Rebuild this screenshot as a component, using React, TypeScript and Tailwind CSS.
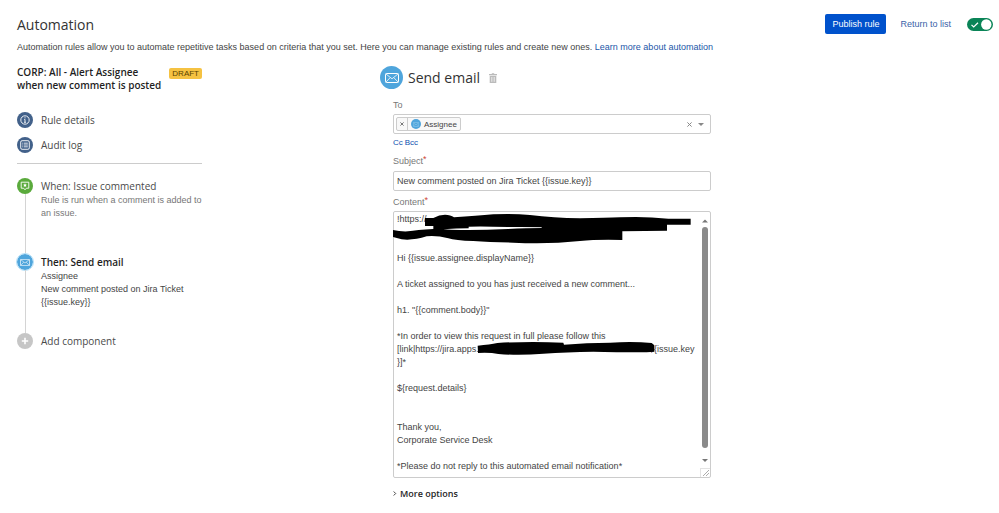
import { useState } from "react"
import type { ReactNode } from "react"

const HEADING = "font-['Open_Sans',sans-serif]"

const initialContent = [
  "!https://",
  "",
  "",
  "Hi {{issue.assignee.displayName}}",
  "",
  "A ticket assigned to you has just received a new comment...",
  "",
  'h1. "{{comment.body}}"',
  "",
  "*In order to view this request in full please follow this",
  "[link|https://jira.apps." + "\u00a0".repeat(68) + "${issue.key",
  "}]*",
  "",
  "${request.details}",
  "",
  "",
  "Thank you,",
  "Corporate Service Desk",
  "",
  "*Please do not reply to this automated email notification*",
].join("\n")

function MailIcon({ className }: { className: string }) {
  return (
    <svg viewBox="0 0 14 10" className={className} fill="none" stroke="currentColor" aria-hidden="true">
      <rect x="0.5" y="0.5" width="13" height="9" rx="0.8" />
      <path d="M1 1l6 4.8L13 1M1 9l4.2-4.4M13 9L8.8 4.6" strokeWidth="0.8" />
    </svg>
  )
}

function InfoIcon() {
  return (
    <svg viewBox="0 0 10 10" className="size-[10px]" fill="none" stroke="currentColor" aria-hidden="true">
      <circle cx="5" cy="5" r="4.2" strokeWidth="0.9" />
      <path d="M5 4.4v3M4.3 4.5H5M4.1 7.3h1.8" strokeWidth="0.9" />
      <circle cx="5" cy="2.8" r="0.6" fill="currentColor" stroke="none" />
    </svg>
  )
}

function LogIcon() {
  return (
    <svg viewBox="0 0 10 10" className="size-[10px]" fill="none" stroke="currentColor" aria-hidden="true">
      <rect x="0.7" y="0.7" width="8.6" height="8.6" rx="1.4" strokeWidth="0.9" />
      <path d="M2.3 3.2h.8M3.8 3.2h4M2.3 5h.8M3.8 5h4M2.3 6.8h.8M3.8 6.8h4" strokeWidth="0.8" />
    </svg>
  )
}

function CommentIcon() {
  return (
    <svg viewBox="0 0 10 10" className="size-[10px]" fill="none" stroke="currentColor" aria-hidden="true">
      <path d="M1.2 1.2h7.6v6H6.4L5 8.8 3.6 7.2H1.2z" strokeWidth="0.9" strokeLinejoin="round" />
      <path d="M5 2.3l.6 1.2 1.3.2-.9.9.2 1.3L5 5.3l-1.2.6.2-1.3-.9-.9 1.3-.2z" fill="currentColor" stroke="none" />
    </svg>
  )
}

function Step({
  icon,
  color,
  title,
  active,
  last,
  className,
  children,
}: {
  icon: ReactNode
  color: string
  title: string
  active?: boolean
  last?: boolean
  className: string
  children?: ReactNode
}) {
  return (
    <li className={`flex gap-2 ${className}`}>
      {/* Pastille + trait de liaison */}
      <div className="flex w-4 shrink-0 flex-col items-center">
        <span className={`flex size-4 shrink-0 items-center justify-center rounded-full text-white ${color}`}>
          {icon}
        </span>
        {!last && <span className="w-px flex-1 bg-[#d4d4d4]" />}
      </div>
      <div className="min-w-0 flex-1">
        <button
          type="button"
          className={`${HEADING} block text-[10px] leading-4 ${
            active ? "font-semibold text-[#1f1f1f]" : "text-[#4a4a4a]"
          }`}
        >
          {title}
        </button>
        {children}
      </div>
    </li>
  )
}

/* Traits noirs qui masquent les adresses internes */
function Redactions() {
  return (
    <svg
      viewBox="39 63 954 801"
      className="pointer-events-none absolute top-0 left-0 h-[267px] w-[318px]"
      fill="#000"
      aria-hidden="true"
    >
      <path d="M135 84 160 84Q178 74 195 74Q212 74 222 82Q290 78 340 73Q400 70 450 75Q520 84 600 85Q680 84 720 82Q790 78 865 86H932V104H861V122L727 124V150Q650 148 600 153Q500 164 400 158Q330 157 280 153Q225 152 205 145Q170 136 140 139Q100 152 65 148L38 141V120Q60 125 84 124Q110 120 160 117V108H135Z" />
      <path d="M266 110Q300 108 384 111Q440 110 485 112V114Q440 114 384 117Q320 120 265 120Q220 121 190 118Q230 115 266 115Z" fill="#fff" />
      <path d="M293 467Q330 464 352 459Q450 453 550 458L552 464Q620 458 690 458Q760 454 815 459L823 466V485L800 487Q700 487 640 485Q560 486 490 491Q420 497 355 492Q330 487 294 489Z" />
    </svg>
  )
}

export default function App() {
  const [enabled, setEnabled] = useState(true)
  const [subject, setSubject] = useState("New comment posted on Jira Ticket {{issue.key}}")
  const [content, setContent] = useState(initialContent)

  return (
    <div className="min-h-screen bg-white font-['Liberation_Sans',Arial,sans-serif] text-[9px] leading-[13px] text-[#444]">
      <header className="flex items-start justify-between pt-[14px] pr-1.5 pl-[17px]">
        <div>
          <h1 className={`${HEADING} text-[14px] leading-[22px] text-[#333]`}>Automation</h1>
          <p className="mt-[5px]">
            Automation rules allow you to automate repetitive tasks based on criteria that you set. Here you can manage
            existing rules and create new ones.{" "}
            <a href="#learn" className="text-[#1a56a8]">
              Learn more about automation
            </a>
          </p>
        </div>
        <div className="flex items-center">
          <button type="button" className="h-5 rounded-xs bg-[#0052cc] px-[7px] text-white">
            Publish rule
          </button>
          <a href="#list" className="ml-[14px] text-[#3a62a8]">
            Return to list
          </a>
          <label className="relative ml-4 h-[13px] w-[26px] shrink-0">
            <input
              type="checkbox"
              role="switch"
              aria-label="Rule enabled"
              checked={enabled}
              onChange={(e) => setEnabled(e.target.checked)}
              className="peer block h-full w-full appearance-none rounded-full bg-gray-400 checked:bg-[#0a8457]"
            />
            <svg
              viewBox="0 0 26 13"
              className="pointer-events-none absolute inset-0"
              fill="none"
              aria-hidden="true"
            >
              {enabled && <path d="M4.5 6.8l2.2 2.2L11 4.8" stroke="#fff" strokeWidth="1.2" />}
              <circle cx={enabled ? 19.3 : 6.7} cy="6.5" r="5.2" fill="#fff" />
            </svg>
          </label>
        </div>
      </header>

      <main className="flex items-start gap-[178px] pr-4 pl-[17px]">
        <aside className="w-[185px] shrink-0 pt-3">
          <div className="flex items-start justify-between">
            <h2 className={`${HEADING} text-[10px] leading-[13px] font-semibold text-[#1f1f1f]`}>
              CORP: All - Alert Assignee
              <br />
              when new comment is posted
            </h2>
            <span className="mt-0.5 rounded-xs bg-[#f5c242] px-[3px] text-[8px] leading-[11px] text-[#594300]">
              DRAFT
            </span>
          </div>

          <nav className="mt-5 flex flex-col gap-[9px] border-b border-[#ccc] pb-[10px]">
            <a href="#details" className={`${HEADING} flex items-center gap-2 text-[10px] leading-4 text-[#4a4a4a]`}>
              <span className="flex size-4 items-center justify-center rounded-full bg-[#42618a] text-white">
                <InfoIcon />
              </span>
              Rule details
            </a>
            <a href="#audit" className={`${HEADING} flex items-center gap-2 text-[10px] leading-4 text-[#4a4a4a]`}>
              <span className="flex size-4 items-center justify-center rounded-full bg-[#42618a] text-white">
                <LogIcon />
              </span>
              Audit log
            </a>
          </nav>

          <ol className="mt-[14px]">
            <Step icon={<CommentIcon />} color="bg-[#5aaa3c]" title="When: Issue commented" className="h-[76px]">
              <p className="text-[#777]">
                Rule is run when a comment is added to
                <br />
                an issue.
              </p>
            </Step>
            <Step
              icon={<MailIcon className="h-[7px] w-[10px]" />}
              color="bg-[#4fa5dc] outline outline-[#b5e0f8]"
              title="Then: Send email"
              active
              className="h-[79px]"
            >
              <p>Assignee</p>
              <p>
                New comment posted on Jira Ticket
                <br />
                {"{{issue.key}}"}
              </p>
            </Step>
            <Step
              icon={
                <svg viewBox="0 0 8 8" className="size-2" stroke="currentColor" strokeWidth="1.6" aria-hidden="true">
                  <path d="M4 .8v6.4M.8 4h6.4" />
                </svg>
              }
              color="bg-[#c6c6c6]"
              title="Add component"
              last
              className=""
            />
          </ol>
        </aside>

        <section className="max-w-[331px] min-w-0 flex-1 pt-3">
          <div className="flex items-center gap-[5px]">
            <span className="flex size-[23px] items-center justify-center rounded-full bg-[#4fa5dc] text-white">
              <MailIcon className="h-[10px] w-[14px]" />
            </span>
            <h2 className={`${HEADING} text-[14px] leading-[22px] text-[#333]`}>Send email</h2>
            <button type="button" aria-label="Delete" className="ml-1 text-[#bbb]">
              <svg viewBox="0 0 8 10" className="h-[10px] w-2" fill="none" aria-hidden="true">
                <path d="M2.8 1V.3h2.4V1H8v1.2H0V1z" fill="currentColor" />
                <path d="M.7 2.8h6.6V10H.7z" fill="currentColor" />
                <path d="M2.5 4v4.8M4 4v4.8M5.5 4v4.8" stroke="#fff" strokeWidth="0.5" />
              </svg>
            </button>
          </div>

          <form className="ml-[13px]" onSubmit={(e) => e.preventDefault()}>
            <label htmlFor="to" className="mt-[10px] block text-[#777]">
              To
            </label>
            <div className="mt-[2px] flex h-5 items-center rounded-xs border border-[#ccc] px-0.5">
              <span className="flex h-[14px] shrink-0 items-center rounded-xs border border-[#ccc] bg-[#f8f8f8]">
                <button
                  type="button"
                  aria-label="Remove Assignee"
                  className="flex h-full w-[11px] items-center justify-center border-r border-[#ccc]"
                >
                  <svg viewBox="0 0 4 4" className="size-1" stroke="#555" strokeWidth="0.8" aria-hidden="true">
                    <path d="M.4.4l3.2 3.2M3.6.4L.4 3.6" />
                  </svg>
                </button>
                <span className="ml-[3px] flex size-[10px] items-center justify-center rounded-full bg-[#4fa5dc] text-[#a9d8f4]">
                  <MailIcon className="h-[5px] w-[6px]" />
                </span>
                <span className="mx-[3px] text-[8px]">Assignee</span>
              </span>
              <input id="to" type="text" className="min-w-0 flex-1 outline-none" />
              <button type="button" aria-label="Clear" className="mr-1.5">
                <svg viewBox="0 0 5 5" className="size-[5px]" stroke="#888" aria-hidden="true">
                  <path d="M.4.4l4.2 4.2M4.6.4L.4 4.6" />
                </svg>
              </button>
              <button type="button" aria-label="Open list" className="mr-1">
                <svg viewBox="0 0 6 3" className="h-[3px] w-[6px]" fill="#888" aria-hidden="true">
                  <path d="M0 0h6L3 3z" />
                </svg>
              </button>
            </div>
            <div className="mt-[2px] flex gap-[2px] text-[8px] text-[#0b4fb0]">
              <button type="button">Cc</button>
              <button type="button">Bcc</button>
            </div>

            <label htmlFor="subject" className="mt-[6px] block text-[#777]">
              Subject<span className="align-top leading-none text-[#d04437]">*</span>
            </label>
            <input
              id="subject"
              type="text"
              value={subject}
              onChange={(e) => setSubject(e.target.value)}
              className="mt-[3px] block h-5 w-full rounded-xs border border-[#ccc] px-[3px]"
            />

            <label htmlFor="content" className="mt-[5px] block text-[#777]">
              Content<span className="align-top leading-none text-[#d04437]">*</span>
            </label>
            <div className="relative mt-[2px]">
              <textarea
                id="content"
                rows={20}
                value={content}
                onChange={(e) => setContent(e.target.value)}
                className="block h-[267px] w-full resize-none overflow-y-auto rounded-xs border border-[#ccc] pt-px pr-3 pl-[3px] [scrollbar-width:none]"
              />
              <Redactions />
              {/* Barre de défilement */}
              <svg
                viewBox="0 0 10 265"
                className="pointer-events-none absolute top-px right-px h-[265px] w-[10px]"
                aria-hidden="true"
              >
                <path d="M2 10.500h6L5 7.500z" fill="#777" />
                <rect x="2" y="15" width="6" height="221" rx="3" fill="#8a8a8a" />
                <path d="M2 247h6L5 250z" fill="#777" />
                <path d="M0 256.500h10M.5 256v9" stroke="#e3e3e3" fill="none" />
                <path d="M3 264l6-6M6 264l3-3" stroke="#888" strokeWidth="0.7" fill="none" />
              </svg>
            </div>

            <button
              type="button"
              className={`${HEADING} mt-2 flex items-center gap-[3px] text-[9px] leading-[15px] font-semibold text-[#1f1f1f]`}
            >
              <svg viewBox="0 0 4 5" className="h-[5px] w-1" fill="none" stroke="#333" aria-hidden="true">
                <path d="M.7.500l2 2-2 2" strokeWidth="0.9" />
              </svg>
              More options
            </button>
          </form>
        </section>
      </main>
    </div>
  )
}
